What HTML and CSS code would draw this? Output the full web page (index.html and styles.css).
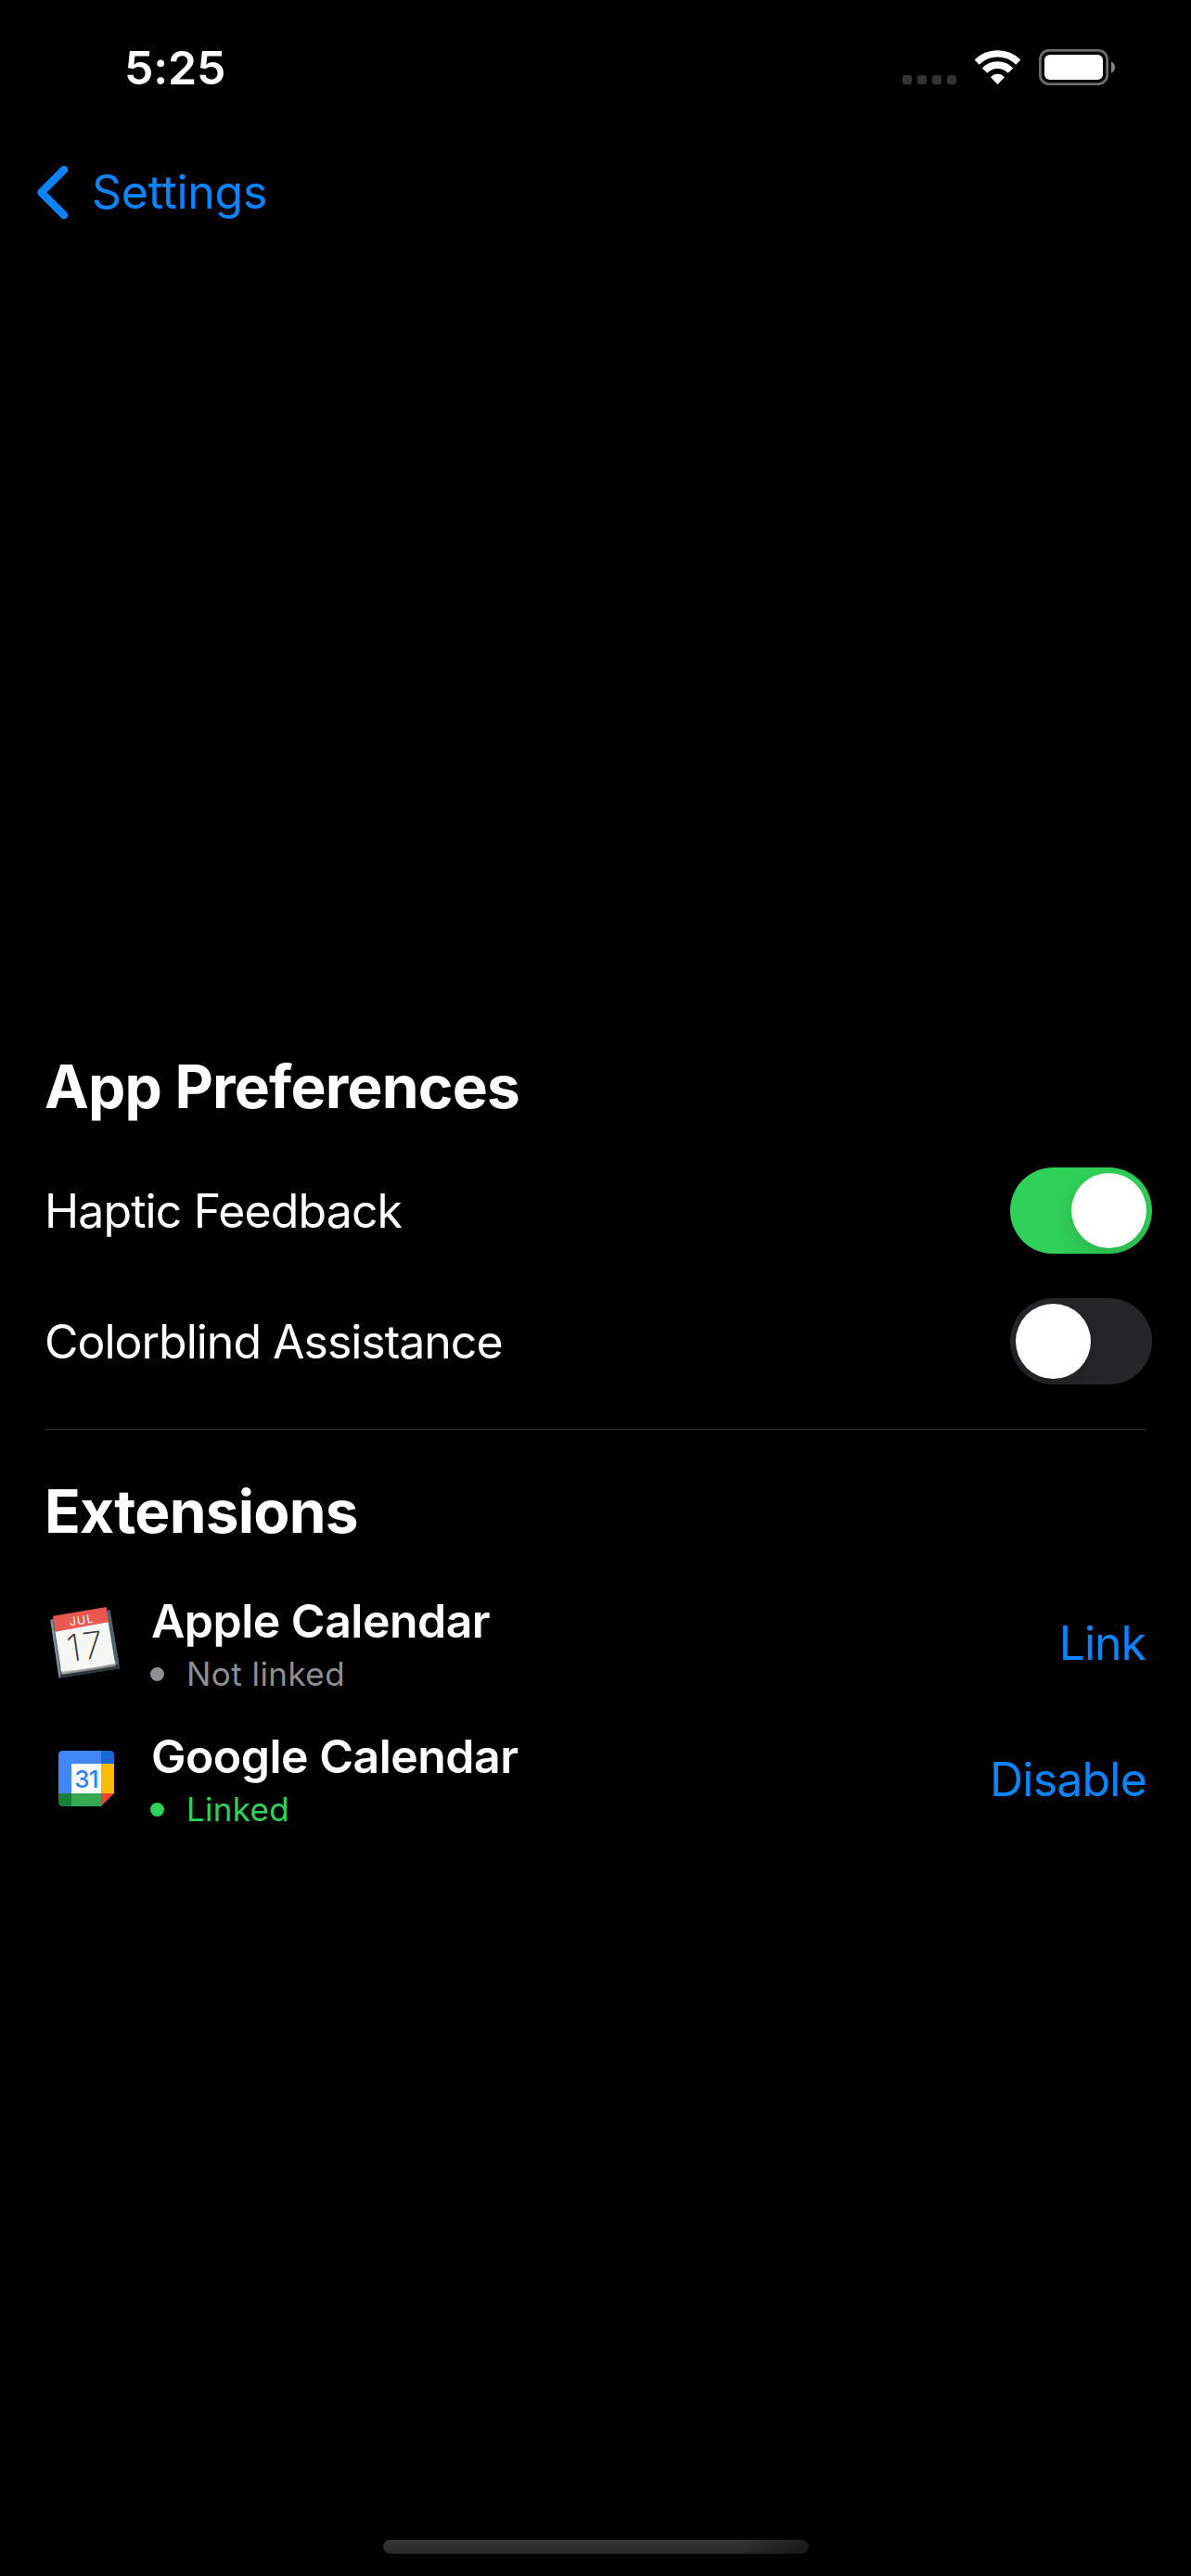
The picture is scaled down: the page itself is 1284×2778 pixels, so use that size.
FILE: index.html
```html
<!DOCTYPE html>
<html lang="en">
<head>
<meta charset="utf-8">
<title>App Preferences</title>
<link rel="stylesheet" href="styles.css">
</head>
<body>
<div class="screen">
  <header class="status-bar">
    <span class="time">5:25</span>
    <div class="status-icons">
      <svg class="cellular" viewBox="99 66 174 126" aria-hidden="true">
        <g fill="#333"><rect x="99" y="153" width="30" height="30" rx="9"/><rect x="147" y="153" width="30" height="30" rx="9"/><rect x="195" y="153" width="30" height="30" rx="9"/><rect x="243" y="153" width="30" height="30" rx="9"/></g>
      </svg>
      <svg class="wifi" viewBox="330 66 153 126" aria-hidden="true">
        <g fill="none" stroke="#fff"><path stroke-width="22" d="M339.5 111.5A95 95 0 0 1 473.5 111.5"/><path stroke-width="23" d="M364.5 138.5A58 58 0 0 1 448.5 138.5"/></g>
        <path fill="#fff" stroke="#fff" stroke-width="2" stroke-linejoin="round" d="M385 160Q394 150 406.5 150T428 160L406.5 182Z"/>
      </svg>
      <svg class="battery" viewBox="540 66 246 126" aria-hidden="true">
        <rect x="544" y="73" width="217" height="109" rx="29" fill="none" stroke="#6b6b6b" stroke-width="8.5"/>
        <rect x="558" y="87" width="189" height="81" rx="17" fill="#fff"/>
        <path fill="#858585" d="M774 109Q786 115 786 127.500T774 146Z"/>
      </svg>
    </div>
  </header>

  <nav class="nav-bar">
    <a class="back">
      <svg class="chevron" viewBox="0 0 33 57" aria-hidden="true"><path d="M29 4L4.500 28.500L29 53"/></svg>
      <span>Settings</span>
    </a>
  </nav>

  <main class="content">
    <section class="preferences">
      <h2>App Preferences</h2>
      <div class="pref-row"><span>Haptic Feedback</span><span class="toggle on"><i class="knob"></i></span></div>
      <div class="pref-row"><span class="long">Colorblind Assistance</span><span class="toggle"><i class="knob"></i></span></div>
    </section>
    <section class="extensions">
      <h2>Extensions</h2>
      <div class="ext-row">
        <svg class="app-icon" viewBox="24 57 264 264" aria-hidden="true">
          <defs>
            <linearGradient id="red" x1="0" y1="0" x2="0" y2="1"><stop offset="0" stop-color="#e8554f"/><stop offset="1" stop-color="#ea5a54"/></linearGradient>
            <linearGradient id="curl" gradientUnits="userSpaceOnUse" x1="164" y1="263" x2="168" y2="286"><stop offset="0" stop-color="#d8d8d6"/><stop offset=".4" stop-color="#8b8b88"/><stop offset="1" stop-color="#232527"/></linearGradient>
          </defs>
          <path fill="#52626c" d="M43 111L53 107L226 80L236 78L268 268L71 299Z"/>
          <path fill="#2c363c" d="M76 285L267 255L268 268L71 299Z"/>
          <path fill="#859099" d="M43 111L49 109L76 290L71 299Z"/>
          <path fill="url(#curl)" d="M76 268L252 242L255 262L81 288Z"/>
          <path fill="#f6f6f5" d="M58 146L230 117L252 251Q163 271 78 276Z"/>
          <path fill="url(#red)" d="M51 98L224 69L231 118L59 149Z"/>
          <text class="cal-month" transform="translate(106 130) rotate(-8)" textLength="78">JUL</text>
          <g class="cal-day"><text transform="translate(102 247) rotate(-8)" textLength="119">17</text></g>
        </svg>
        <div class="ext-text">
          <h3>Apple Calendar</h3>
          <p class="state"><i class="dot"></i>Not linked</p>
        </div>
        <a class="action link">Link</a>
      </div>
      <div class="ext-row">
        <svg class="app-icon" viewBox="24 45 264 264" aria-hidden="true">
          <path fill="#4285f4" d="M83 84H207V126H111V222H69V98Q69 84 83 84Z"/>
          <path fill="#1967d2" d="M207 84H235Q249 84 249 98V126H207Z"/>
          <path fill="#fbbc04" d="M207 126H249V222H207Z"/>
          <path fill="#ea4335" d="M207 222H249L207 264Z"/>
          <path fill="#34a853" d="M111 222H207V264H111Z"/>
          <path fill="#188038" d="M69 222H111V264H83Q69 264 69 250Z"/>
          <path fill="#fff" d="M111 126H207V222H111Z"/>
          <text class="g-day" x="121" y="203" textLength="79">31</text>
        </svg>
        <div class="ext-text">
          <h3>Google Calendar</h3>
          <p class="state linked"><i class="dot"></i>Linked</p>
        </div>
        <a class="action">Disable</a>
      </div>
    </section>
  </main>

  <footer class="home"><div class="home-indicator"></div></footer>
</div>
</body>
</html>
```
FILE: styles.css
```css
* { box-sizing: border-box; }
body { margin: 0; background: #000; color: #fff; font-family: Inter, "Liberation Sans", sans-serif; font-size: 50px; line-height: 60px; }
h2, h3, p { margin: 0; }
.screen { width: 1284px; height: 2778px; display: flex; flex-direction: column; overflow: hidden; }

.status-bar { height: 146px; padding: 0 82px 0 134px; display: flex; align-items: center; justify-content: space-between; }
.time { font-weight: 600; letter-spacing: -.18px; }
.status-icons { display: flex; }
.status-icons svg { display: block; height: 42px; }
.cellular { width: 58px; margin-right: 19px; }
.wifi { width: 51px; margin-right: 19px; }
.battery { width: 82px; }

.nav-bar { height: 122px; padding-left: 40px; display: flex; align-items: center; }
.back { display: flex; align-items: center; gap: 26px; color: #0a84ff; letter-spacing: -.3px; }
.chevron { width: 33px; height: 57px; fill: none; stroke: #0a84ff; stroke-width: 8.5; stroke-linecap: round; stroke-linejoin: round; }

.content { flex: 1; padding: 864px 48px 0; }
h2 { font-size: 64px; font-weight: 700; line-height: 80px; letter-spacing: -.8px; }
.preferences { display: flex; flex-direction: column; gap: 48px; padding-bottom: 48px; border-bottom: 1px solid #303032; }
.preferences h2 { margin-bottom: -1px; }
.pref-row { height: 93px; margin-right: -6px; display: flex; align-items: center; justify-content: space-between; letter-spacing: -.9px; }
.pref-row .long { letter-spacing: -1.02px; }
.toggle { width: 153px; height: 93px; padding: 6px; border-radius: 47px; background: #262628; display: flex; overflow: hidden; }
.toggle.on { background: #30d158; justify-content: flex-end; }
.knob { width: 81px; height: 81px; border-radius: 50%; background: #fff; box-shadow: 0 9px 24px rgba(0, 0, 0, .15); }

.extensions { padding-top: 48px; }
.ext-row { height: 110px; display: flex; align-items: center; }
.extensions h2 + .ext-row { margin: 48px 0 36px; }
.app-icon { width: 88px; height: 88px; display: block; margin-right: 27px; }
.ext-text { flex: 1; }
h3 { font-size: 50px; font-weight: 600; line-height: 60px; letter-spacing: -.53px; }
.state { margin-top: 4px; display: flex; align-items: center; font-size: 35px; line-height: 46px; letter-spacing: .45px; color: #8e8e93; }
.linked { color: #30d158; letter-spacing: .3px; }
.dot { width: 15px; height: 15px; margin: 0 24px 0 -1px; border-radius: 50%; background: currentColor; }
.action { color: #0a84ff; letter-spacing: -.8px; }
.action.link { letter-spacing: -1px; padding: 0 1px 2px 0; }

.cal-month { font-size: 38px; fill: #fff; }
.cal-day { font-size: 120px; font-weight: 200; fill: #3c3c3c; }
.g-day { font-size: 78px; font-weight: 500; fill: #2f80f2; }

.home { height: 39px; display: flex; justify-content: center; }
.home-indicator { width: 459px; height: 15px; border-radius: 8px; background: linear-gradient(90deg, transparent 84%, rgba(0, 0, 0, .45)), linear-gradient(#363636, #272727); }
```
